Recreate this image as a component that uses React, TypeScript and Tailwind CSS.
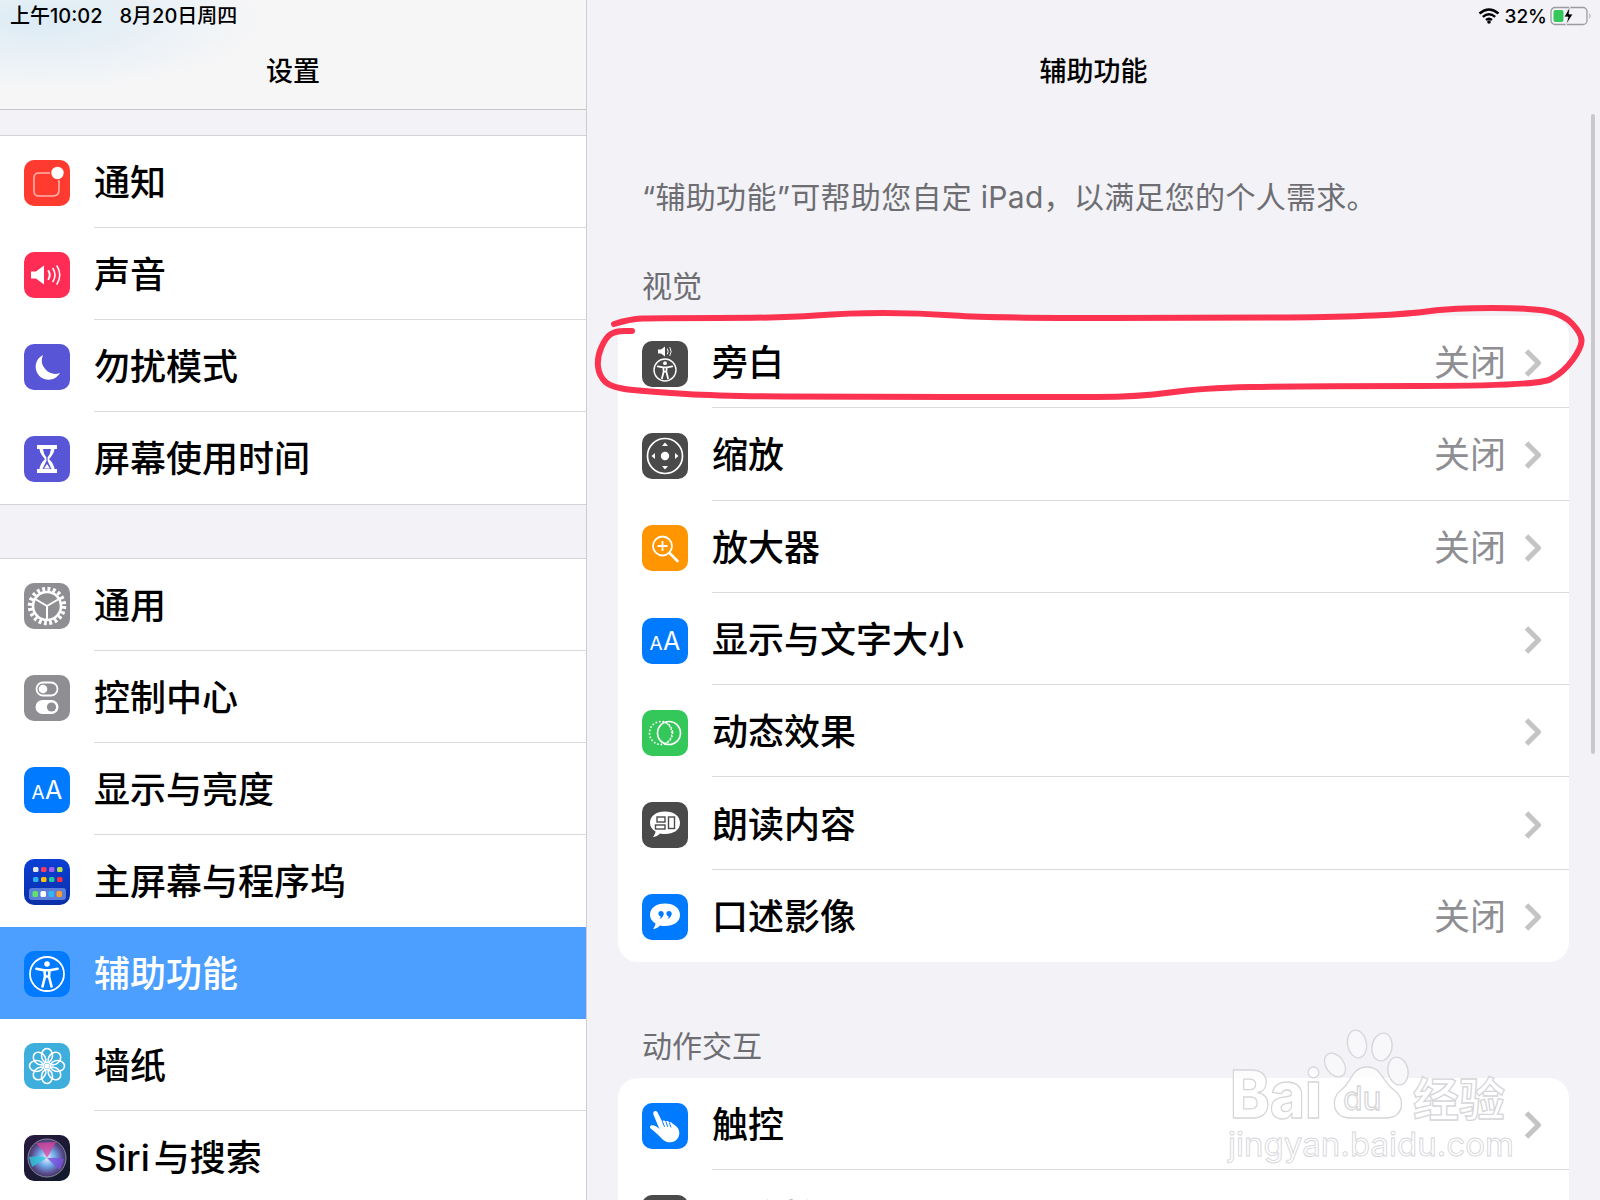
import type { ReactNode } from "react";

const circlePts: [number, number][] = [
  [614, 324], [630, 319], [654, 318], [783, 318], [848, 313], [919, 313], [989, 318], [1234, 318],
  [1340, 317], [1408, 314], [1453, 308], [1531, 308], [1563, 314], [1581, 333], [1582, 347], [1563, 373],
  [1537, 386], [1299, 386], [1202, 388], [1138, 397], [1054, 397], [848, 397], [719, 396], [654, 392],
  [612, 388], [599, 376], [597, 357], [606, 337], [616, 331], [632, 331],
];

function smooth(pts: [number, number][]) {
  let d = `M${pts[0][0]} ${pts[0][1]}`;
  for (let i = 1; i < pts.length - 1; i++) {
    const mx = (pts[i][0] + pts[i + 1][0]) / 2;
    const my = (pts[i][1] + pts[i + 1][1]) / 2;
    d += ` Q${pts[i][0]} ${pts[i][1]} ${mx} ${my}`;
  }
  const last = pts[pts.length - 1];
  return d + ` L${last[0]} ${last[1]}`;
}

function Tile({ bg, children }: { bg: string; children?: ReactNode }) {
  return (
    <div className={`w-[46px] h-[46px] shrink-0 rounded-[10px] overflow-hidden ${bg}`}>
      <svg viewBox="0 0 46 46" width="46" height="46" fill="none">
        {children}
      </svg>
    </div>
  );
}

function Figure({ cx, cy, s }: { cx: number; cy: number; s: number }) {
  return (
    <g transform={`translate(${cx} ${cy}) scale(${s})`} stroke="white" strokeLinecap="round" strokeLinejoin="round">
      <circle cx="0" cy="-8" r="2.2" fill="white" stroke="none" />
      <path d="M-8.5 -4.2 L-2.5 -3 L2.5 -3 L8.5 -4.2 M-2 -3 L-1.6 2 L-3.6 10 M2 -3 L1.6 2 L3.6 10 M-1.6 2 L1.6 2" strokeWidth="2.1" />
    </g>
  );
}

function AA() {
  return (
    <g fill="white" fontFamily="Inter, sans-serif">
      <text x="7.5" y="32" fontSize="19">A</text>
      <text x="21" y="32" fontSize="25">A</text>
    </g>
  );
}

const icons: Record<string, ReactNode> = {
  notify: (
    <Tile bg="bg-[#ff3b30]">
      <path d="M26 13 H15 Q10 13 10 18 V31 Q10 36 15 36 H29 Q35 36 35 30 V20" stroke="#ffb3ad" strokeWidth="1.6" />
      <circle cx="33.5" cy="13" r="6.2" fill="white" />
    </Tile>
  ),
  sound: (
    <Tile bg="bg-[#ff2d55]">
      <path d="M7 19.5 H12 L20 13.5 V32.5 L12 26.5 H7 Z" fill="white" />
      <g stroke="white" strokeLinecap="round">
        <path d="M24.5 19 Q27 23 24.5 27" strokeWidth="2" />
        <path d="M29 16.5 Q33 23 29 29.5" strokeWidth="1.6" />
        <path d="M33 14 Q38.5 23 33 32" strokeWidth="1.5" />
      </g>
    </Tile>
  ),
  moon: (
    <Tile bg="bg-[#5856d6]">
      <path d="M19 11 A13 13 0 1 0 36 29 A13.5 13.5 0 0 1 19 11 Z" fill="white" />
    </Tile>
  ),
  hourglass: (
    <Tile bg="bg-[#5856d6]">
      <path d="M13 9 H33 V13 H30.5 Q30 18 25 23 Q30 28 30.5 33 H33 V37 H13 V33 H15.5 Q16 28 21 23 Q16 18 15.5 13 H13 Z" fill="white" />
      <path d="M19 13 H27 Q26.5 18 23.6 21.5 V25 L27.5 33 H18.5 L22.4 25 V21.5 Q19.5 18 19 13 Z" fill="#5856d6" />
      <path d="M20 32.5 L23 28 L26 32.5 Z" fill="white" />
    </Tile>
  ),
  gear: (
    <Tile bg="bg-[#8e8e93]">
      <circle cx="23" cy="23" r="17" stroke="white" strokeWidth="4.4" strokeDasharray="2.9 2.44" />
      <circle cx="23" cy="23" r="14" stroke="white" strokeWidth="2.6" />
      <path d="M23 23 L12 16.5 M23 23 L34 16.5 M23 23 V36" stroke="white" strokeWidth="2" />
    </Tile>
  ),
  control: (
    <Tile bg="bg-[#8e8e93]">
      <rect x="12.5" y="7.5" width="21" height="13" rx="6.5" stroke="white" strokeWidth="1.8" />
      <circle cx="19" cy="14" r="4.3" fill="white" />
      <rect x="11.5" y="25" width="23" height="14" rx="7" fill="white" />
      <circle cx="27.5" cy="32" r="4.6" fill="#8e8e93" />
    </Tile>
  ),
  aa: (
    <Tile bg="bg-[#007aff]">
      <AA />
    </Tile>
  ),
  home: (
    <Tile bg="bg-[linear-gradient(180deg,#0b3fd6,#0a2fa8)]">
      {["#e8e8f0", "#ff3b5c", "#a55ff0", "#b8e04a"].map((c, i) => (
        <rect key={c} x={9 + i * 8} y="8" width="5.5" height="5" rx="1.5" fill={c} />
      ))}
      {["#2bb0f5", "#ffc107", "#1fc8a0", "#ff3040"].map((c, i) => (
        <rect key={c} x={9 + i * 8} y="18" width="5.5" height="5" rx="1.5" fill={c} />
      ))}
      <rect x="5" y="29" width="37" height="12" rx="3" fill="#5b7fd8" />
      {["#5fe070", "#ffffff", "#30b8f5", "#ff9a30"].map((c, i) => (
        <rect key={c} x={8.5 + i * 8} y="32" width="5.5" height="6" rx="1.5" fill={c} />
      ))}
    </Tile>
  ),
  access: (
    <Tile bg="bg-[#007aff]">
      <circle cx="23" cy="23" r="17" stroke="white" strokeWidth="1.8" />
      <Figure cx={23} cy={23} s={1.25} />
    </Tile>
  ),
  flower: (
    <Tile bg="bg-[#3eaedd]">
      {[0, 45, 90, 135, 180, 225, 270, 315].map((a) => (
        <ellipse key={a} cx="23" cy="12.5" rx="5.5" ry="7" stroke="white" strokeWidth="1.6" transform={`rotate(${a} 23 23)`} />
      ))}
      <circle cx="23" cy="23" r="2.6" fill="white" />
    </Tile>
  ),
  siri: (
    <Tile bg="bg-[linear-gradient(135deg,#2a1a40,#0f1a2a)]">
      <defs>
        <radialGradient id="siriA" cx="0.5" cy="0.5" r="0.55">
          <stop offset="0" stopColor="#e8f0ff" />
          <stop offset="0.4" stopColor="#6fa8e8" />
          <stop offset="0.75" stopColor="#5a4a8c" />
          <stop offset="1" stopColor="#33304f" />
        </radialGradient>
      </defs>
      <circle cx="23" cy="23" r="19" fill="url(#siriA)" stroke="#8a8aa0" strokeWidth="1" />
      <path d="M5 22 Q16 20 23 23 Q14 28 8 32 Z" fill="#2fc5d8" opacity="0.8" />
      <path d="M12 8 Q20 16 23 23 Q28 14 32 7 Z" fill="#e0409a" opacity="0.75" />
      <path d="M40 24 Q30 22 23 23 Q30 30 36 35 Z" fill="#7a50e0" opacity="0.8" />
    </Tile>
  ),
  voiceover: (
    <Tile bg="bg-[#4a4a4a]">
      <path d="M16 8.5 H19 L23 5.5 V15.5 L19 12.5 H16 Z" fill="white" />
      <path d="M25.5 8 Q27 10.5 25.5 13 M28 6.5 Q30.5 10.5 28 14.5" stroke="white" strokeWidth="1" strokeLinecap="round" />
      <circle cx="23" cy="29" r="11" stroke="white" strokeWidth="1.4" />
      <Figure cx={23} cy={29} s={0.85} />
    </Tile>
  ),
  zoom: (
    <Tile bg="bg-[#4a4a4a]">
      <circle cx="23" cy="23" r="17.5" stroke="white" strokeWidth="1.7" />
      <circle cx="23" cy="23" r="4.2" fill="white" />
      <g fill="white">
        <path d="M23 9.5 L26 13 H20 Z" />
        <path d="M23 36.5 L26 33 H20 Z" />
        <path d="M9.5 23 L13 20 V26 Z" />
        <path d="M36.5 23 L33 20 V26 Z" />
      </g>
    </Tile>
  ),
  magnifier: (
    <Tile bg="bg-[#ff9500]">
      <circle cx="20.5" cy="21" r="9.5" stroke="white" strokeWidth="1.8" />
      <path d="M20.5 16 V26 M15.5 21 H25.5" stroke="white" strokeWidth="1.8" />
      <path d="M27.5 28 L35.5 36" stroke="white" strokeWidth="2.6" strokeLinecap="round" />
    </Tile>
  ),
  motion: (
    <Tile bg="bg-[#34c759]">
      <circle cx="19" cy="23" r="11.5" stroke="white" strokeWidth="1.8" strokeDasharray="0.1 3.4" strokeLinecap="round" />
      <circle cx="27" cy="23" r="11.5" stroke="white" strokeWidth="1.6" />
      <path d="M27 12.5 A11.5 11.5 0 0 1 27 33.5" stroke="white" strokeWidth="1.6" strokeDasharray="0.1 3" strokeLinecap="round" transform="translate(-4 0)" />
    </Tile>
  ),
  spoken: (
    <Tile bg="bg-[#4a4a4a]">
      <path d="M23 9.5 C32 9.5 38 14 38 21 C38 28 31.5 32 23 32 C21 32 20 32 18 31.5 C16 33.5 13.5 35 11 35 C12.5 33 13.5 31 13.5 29.5 C10 27.5 8 24.5 8 21 C8 14 14 9.5 23 9.5 Z" fill="white" />
      <g stroke="#4a4a4a" strokeWidth="1.4">
        <rect x="15" y="15" width="8" height="5" />
        <rect x="13.5" y="23" width="9.5" height="4" />
        <rect x="26.5" y="15" width="6" height="11.5" />
      </g>
    </Tile>
  ),
  bubble: (
    <Tile bg="bg-[#007aff]">
      <path d="M23 9.5 C32 9.5 38 14 38 21 C38 28 31.5 32 23 32 C21 32 20 32 18 31.5 C16 33.5 13.5 35 11 35 C12.5 33 13.5 31 13.5 29.5 C10 27.5 8 24.5 8 21 C8 14 14 9.5 23 9.5 Z" fill="white" />
      <g fill="#007aff">
        <circle cx="19" cy="19.5" r="2.6" />
        <path d="M21.5 19.5 Q21.5 23.5 17.5 25 Q19 23 18.5 21 Z" />
        <circle cx="27" cy="19.5" r="2.6" />
        <path d="M29.5 19.5 Q29.5 23.5 25.5 25 Q27 23 26.5 21 Z" />
      </g>
    </Tile>
  ),
  touch: (
    <Tile bg="bg-[#007aff]">
      <path
        d="M12 8.5 C13.3 7.4 15 8 15.6 9.4 L20 18.2 C21 17 22.8 17.2 23.6 18.6 C24.8 17.7 26.4 18 27.1 19.4 C28.3 18.9 29.8 19.4 30.4 20.6 C33.5 22.2 36.6 24.8 37.2 28.4 C37.8 32.4 36 36 33 38 C29.5 40 25 39.6 22 37.4 C18.8 35 15 30 8.6 25.4 C7.4 24.2 8 22.4 9.6 22.2 C12.4 22 15 23.6 17.4 26 L11.4 11.5 C11 10.2 11.2 9.2 12 8.5 Z"
        fill="white"
      />
      <path d="M20.4 18.6 L22.4 23.4 M24 19 L25.6 23.4 M27.5 20 L28.8 24" stroke="#007aff" strokeWidth="1" strokeLinecap="round" />
    </Tile>
  ),
  dark: <Tile bg="bg-[#4a4a4a]" />,
};

function Chevron() {
  return (
    <svg width="18" height="30" viewBox="0 0 18 30" fill="none" className="shrink-0">
      <path d="M2.5 3 L14.5 15 L2.5 27" stroke="#c4c4c7" strokeWidth="5" strokeLinejoin="round" />
    </svg>
  );
}

function SideRow({ icon, label, active, last }: { icon: string; label: ReactNode; active?: boolean; last?: boolean }) {
  return (
    <div className={`h-[92px] pl-6 pt-[2px] flex items-center gap-[24px] ${active ? "bg-[#4c9fff]" : "bg-white"}`}>
      {icons[icon]}
      <div
        className={`flex-1 h-full flex items-center text-[36px] font-medium ${active ? "text-white" : "text-black"} ${
          last || active ? "" : "border-b border-[#d9d9dc]"
        }`}
      >
        {label}
      </div>
    </div>
  );
}

function DetailRow({ icon, label, value, last }: { icon: string; label: string; value?: string; last?: boolean }) {
  return (
    <div className="h-[92.3px] pl-6 pt-[3px] flex items-center gap-[24px]">
      {icons[icon]}
      <div className={`flex-1 h-full flex items-center text-[36px] font-medium text-black pr-[27px] ${last ? "" : "border-b border-[#d9d9dc]"}`}>
        <span className="flex-1">{label}</span>
        {value && <span className="font-normal text-[#8e8e93] mr-[18px]">{value}</span>}
        <Chevron />
      </div>
    </div>
  );
}

function Wifi() {
  return (
    <svg width="22" height="16" viewBox="0 0 22 16" fill="none" className="mr-[2px]">
      <path d="M1.5 5.5 Q11 -2.5 20.5 5.5 M4.8 8.8 Q11 3.5 17.2 8.8 M8 12 Q11 9.5 14 12" stroke="black" strokeWidth="2.4" />
      <circle cx="11" cy="14" r="1.8" fill="black" />
    </svg>
  );
}

function Battery() {
  return (
    <svg width="42" height="20" viewBox="0 0 42 20" fill="none">
      <rect x="1" y="1.5" width="36" height="17" rx="4" stroke="#9b9b9f" strokeWidth="1.3" />
      <rect x="3.5" y="4" width="10" height="12" rx="2" fill="#34c759" />
      <path d="M39.5 7 Q41.5 10 39.5 13 Z" fill="#9b9b9f" />
      <path d="M20 0.5 L14 11 H18 L16 19 L23 8 H19 Z" fill="black" stroke="#f2f2f7" strokeWidth="0.8" />
    </svg>
  );
}

function Watermark() {
  return (
    <g stroke="#d6d6da" strokeWidth="1.3">
      <text x="1230" y="1118" fontSize="66" fill="#ffffff" fillOpacity="0.75" fontFamily="Inter, sans-serif" fontWeight="800" textLength="92" lengthAdjust="spacingAndGlyphs">Bai</text>
      <ellipse cx="1335" cy="1065" rx="9" ry="13" fill="#f8f8fb" transform="rotate(-35 1335 1065)" />
      <ellipse cx="1357" cy="1044" rx="9.5" ry="14" fill="#f8f8fb" transform="rotate(-10 1357 1044)" />
      <ellipse cx="1382" cy="1047" rx="10" ry="14" fill="#f8f8fb" transform="rotate(10 1382 1047)" />
      <ellipse cx="1398" cy="1071" rx="10" ry="14" fill="#f8f8fb" transform="rotate(-12 1398 1071)" />
      <path d="M1367 1067 C1352 1067 1352 1082 1341 1090 C1330 1098 1332 1118 1350 1118 H1386 C1404 1118 1406 1098 1394 1090 C1382 1082 1382 1067 1367 1067 Z" fill="#ffffff" fillOpacity="0.75" />
      <text x="1343" y="1110" fontSize="32" fill="#ffffff" fontFamily="Inter, sans-serif">du</text>
      <text x="1413" y="1116" fontSize="46" fontWeight="700" fill="#ffffff" fillOpacity="0.75" fontFamily="'Noto Sans CJK SC', sans-serif">经验</text>
      <text x="1228" y="1156" fontSize="33" fill="#ffffff" fillOpacity="0.5" strokeWidth="0.9" fontFamily="Inter, sans-serif" textLength="286">jingyan.baidu.com</text>
    </g>
  );
}

export default function App() {
  return (
    <div
      className="relative flex w-[1600px] h-[1200px] overflow-hidden bg-[#f2f2f7]"
      style={{ fontFamily: "Inter, 'Noto Sans CJK SC', sans-serif" }}
    >
      <aside className="w-[587px] shrink-0 border-r border-[#cfcfd3]">
        <header className="h-[110px] border-b border-[#c6c6c8] bg-[#f6f6f7] bg-[radial-gradient(ellipse_220px_70px_at_40px_20px,#dcebf5,transparent)]">
          <div className="h-[32px] pl-[10px] flex items-center gap-[17px] text-[20px] font-medium text-black leading-none">
            <span>上午10:02</span>
            <span>8月20日周四</span>
          </div>
          <h1 className="mt-[19px] text-center text-[27px] font-medium text-black leading-[42px]">设置</h1>
        </header>
        <div className="mt-[25px] border-y border-[#d4d4d8]">
          <SideRow icon="notify" label="通知" />
          <SideRow icon="sound" label="声音" />
          <SideRow icon="moon" label="勿扰模式" />
          <SideRow icon="hourglass" label="屏幕使用时间" last />
        </div>
        <div className="mt-[54px] shadow-[0_-1px_0_#d4d4d8]">
          <SideRow icon="gear" label="通用" />
          <SideRow icon="control" label="控制中心" />
          <SideRow icon="aa" label="显示与亮度" />
          <SideRow icon="home" label="主屏幕与程序坞" last />
          <SideRow icon="access" label="辅助功能" active />
          <SideRow icon="flower" label="墙纸" />
          <SideRow icon="siri" label={<><span>Siri</span><span className="ml-1">与搜索</span></>} last />
        </div>
      </aside>

      <main className="flex-1 min-w-0">
        <div className="h-[32px] pr-[8px] flex items-center justify-end gap-[3px] text-[19px] font-medium text-black leading-none">
          <Wifi />
          <span>32%</span>
          <Battery />
        </div>
        <h2 className="mt-[19px] text-center text-[27px] font-medium text-black leading-[42px]">辅助功能</h2>
        <p className="mt-[84px] pl-[55px] text-[30px] leading-[40px] tracking-[0.3px] text-[#6d6d72]">“辅助功能”可帮助您自定 iPad，以满足您的个人需求。</p>
        <h3 className="mt-[49px] pl-[55px] text-[30px] leading-[40px] text-[#6d6d72]">视觉</h3>
        <section className="mt-[10px] ml-[31px] w-[951px] rounded-[20px] bg-white overflow-hidden">
          <DetailRow icon="voiceover" label="旁白" value="关闭" />
          <DetailRow icon="zoom" label="缩放" value="关闭" />
          <DetailRow icon="magnifier" label="放大器" value="关闭" />
          <DetailRow icon="aa" label="显示与文字大小" />
          <DetailRow icon="motion" label="动态效果" />
          <DetailRow icon="spoken" label="朗读内容" />
          <DetailRow icon="bubble" label="口述影像" value="关闭" last />
        </section>
        <h3 className="mt-[64px] pl-[55px] text-[30px] leading-[40px] text-[#6d6d72]">动作交互</h3>
        <section className="mt-[12px] ml-[31px] w-[951px] rounded-t-[20px] bg-white overflow-hidden">
          <DetailRow icon="touch" label="触控" />
          <DetailRow icon="dark" label="切换控制" />
        </section>
      </main>

      <div className="absolute right-[5px] top-[114px] w-[4px] h-[640px] rounded-full bg-[#c9c9cd]" />

      <svg className="absolute inset-0 pointer-events-none" width="1600" height="1200" viewBox="0 0 1600 1200" fill="none">
        <path d={smooth(circlePts)} stroke="#fb3350" strokeWidth="6" strokeLinecap="round" strokeLinejoin="round" />
        <Watermark />
      </svg>
    </div>
  );
}
